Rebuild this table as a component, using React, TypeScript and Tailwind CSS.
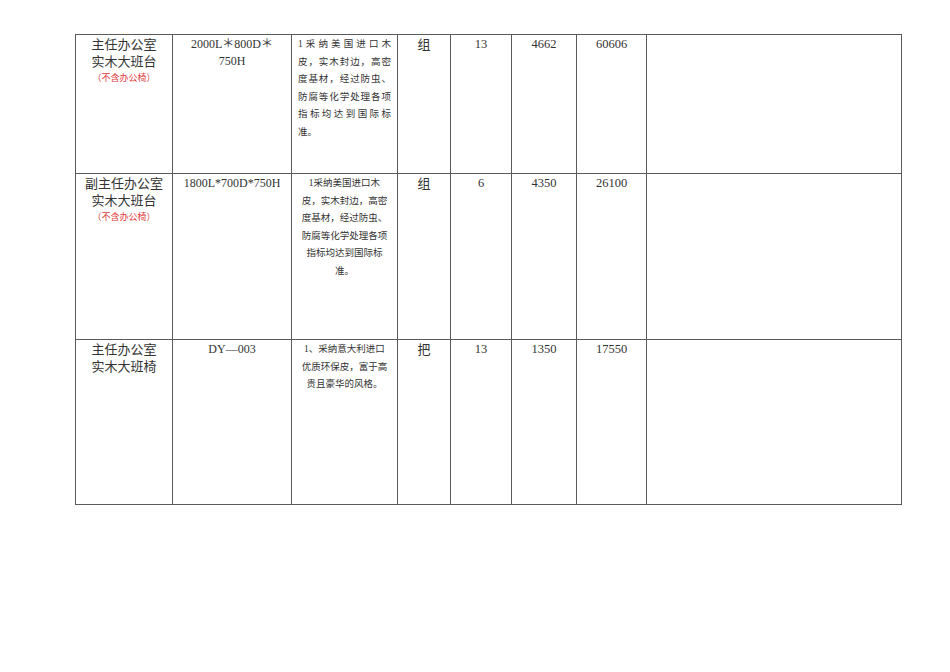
const serif = "font-['Liberation_Serif','Noto_Sans_CJK_SC',serif]";

type Row = {
  name: string[];
  note?: string;
  spec: string[];
  desc: string[];
  justify?: boolean;
  unit: string;
  qty: string;
  price: string;
  total: string;
  height: string;
};

const ROWS: Row[] = [
  {
    name: ["主任办公室", "实木大班台"],
    note: "（不含办公椅）",
    spec: ["2000L＊800D＊", "750H"],
    desc: [
      "1采纳美国进口木",
      "皮，实木封边，高密",
      "度基材，经过防虫、",
      "防腐等化学处理各项",
      "指标均达到国际标",
      "准。",
    ],
    justify: true,
    unit: "组",
    qty: "13",
    price: "4662",
    total: "60606",
    height: "h-[139px]",
  },
  {
    name: ["副主任办公室", "实木大班台"],
    note: "（不含办公椅）",
    spec: ["1800L*700D*750H"],
    desc: [
      "1采纳美国进口木",
      "皮，实木封边，高密",
      "度基材，经过防虫、",
      "防腐等化学处理各项",
      "指标均达到国际标",
      "准。",
    ],
    unit: "组",
    qty: "6",
    price: "4350",
    total: "26100",
    height: "h-[166px]",
  },
  {
    name: ["主任办公室", "实木大班椅"],
    spec: ["DY—003"],
    desc: ["1、采纳意大利进口", "优质环保皮，富于高", "贵且豪华的风格。"],
    unit: "把",
    qty: "13",
    price: "1350",
    total: "17550",
    height: "h-[165px]",
  },
];

const cell = "border border-[#5a5a5a] align-top p-0 pt-[1px]";

export default function App() {
  return (
    <div className={`min-h-[672px] w-[950px] bg-white pl-[75px] pt-[34px] text-[#333] ${serif}`}>
      <table className="table-fixed border-collapse w-[826px]">
        <colgroup>
          <col className="w-[97px]" />
          <col className="w-[119px]" />
          <col className="w-[106px]" />
          <col className="w-[53px]" />
          <col className="w-[61px]" />
          <col className="w-[65px]" />
          <col className="w-[70px]" />
          <col className="w-[255px]" />
        </colgroup>
        <tbody>
          {ROWS.map((r, i) => (
            <tr key={i} className={r.height}>
              <td className={`${cell} text-center`}>
                {r.name.map((n) => (
                  <div key={n} className="text-[13px] leading-[17px] whitespace-nowrap">
                    {n}
                  </div>
                ))}
                {r.note && (
                  <div className="text-[9px] leading-[17px] text-[#e23a3a] whitespace-nowrap">{r.note}</div>
                )}
              </td>
              <td className={`${cell} text-center`}>
                {r.spec.map((s) => (
                  <div key={s} className="text-[12px] leading-[17px] whitespace-nowrap">
                    {s}
                  </div>
                ))}
              </td>
              <td className={`${cell} px-[6px]`}>
                {r.desc.map((d, j) => {
                  const last = j === r.desc.length - 1;
                  return (
                    <div
                      key={j}
                      className={`text-[9.5px] leading-[17.5px] whitespace-nowrap ${
                        r.justify ? (last ? "text-left" : "text-justify [text-align-last:justify]") : "text-center"
                      }`}
                    >
                      {d}
                    </div>
                  );
                })}
              </td>
              <td className={`${cell} text-center text-[13px] leading-[17px]`}>{r.unit}</td>
              <td className={`${cell} text-center text-[12.5px] leading-[17px]`}>{r.qty}</td>
              <td className={`${cell} text-center text-[12.5px] leading-[17px]`}>{r.price}</td>
              <td className={`${cell} text-center text-[12.5px] leading-[17px]`}>{r.total}</td>
              <td className={cell}></td>
            </tr>
          ))}
        </tbody>
      </table>
    </div>
  );
}
